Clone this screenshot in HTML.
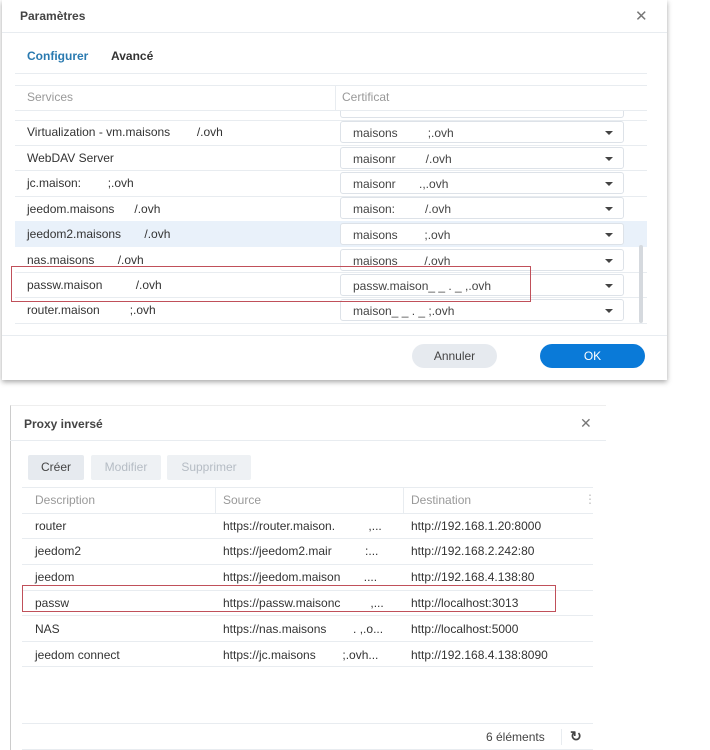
<!DOCTYPE html><html><head><meta charset="utf-8"><style>
*{margin:0;padding:0;box-sizing:border-box}
body{width:710px;height:750px;background:#fff;font-family:"Liberation Sans",sans-serif;font-size:12px;color:#333;position:relative;overflow:hidden}
.a{position:absolute;white-space:nowrap}
.sel{position:absolute;left:340px;width:284px;height:22px;border:1px solid #dde2e8;border-radius:3px;background:#fff;padding:4px 0 0 12px;color:#444}
.sel:after{content:"";position:absolute;right:10px;top:9px;border-left:4px solid transparent;border-right:4px solid transparent;border-top:4px solid #444}
.sel.p:after{display:none}
.hl{position:absolute;height:1px;background:#e8ecf0}
</style></head><body>
<div class="a" style="left:2px;top:0;width:665px;height:380px;background:#fff;box-shadow:0 2px 5px rgba(0,0,0,.35)"></div>
<div class="a" style="left:20px;top:9px;font-size:12px;font-weight:bold;color:#444">Paramètres</div>
<div class="a" style="left:635px;top:7px;font-size:15px;color:#777">✕</div>
<div class="hl" style="left:2px;top:32px;width:665px"></div>
<div class="a" style="left:27px;top:49px;font-weight:bold;color:#2a7ab0">Configurer</div>
<div class="a" style="left:111px;top:49px;font-weight:bold;color:#333">Avancé</div>
<div class="hl" style="left:15px;top:73px;width:632px"></div>
<div class="hl" style="left:15px;top:85px;width:632px"></div>
<div class="a" style="left:27px;top:90px;color:#999">Services</div>
<div class="a" style="left:335px;top:85px;width:1px;height:25px;background:#e8ecf0"></div>
<div class="a" style="left:342px;top:90px;color:#999">Certificat</div>
<div class="hl" style="left:15px;top:110px;width:632px"></div>
<div class="a" style="left:15px;top:221px;width:632px;height:26px;background:#e9f1fa"></div>
<div class="a" style="left:27px;top:125px">Virtualization - vm.maisons&nbsp;&nbsp;&nbsp;&nbsp;&nbsp;&nbsp;&nbsp;&nbsp;/.ovh</div>
<div class="a" style="left:27px;top:151px">WebDAV Server</div>
<div class="a" style="left:27px;top:176px">jc.maison:&nbsp;&nbsp;&nbsp;&nbsp;&nbsp;&nbsp;&nbsp;&nbsp;;.ovh</div>
<div class="a" style="left:27px;top:202px">jeedom.maisons&nbsp;&nbsp;&nbsp;&nbsp;&nbsp;&nbsp;/.ovh</div>
<div class="a" style="left:27px;top:227px">jeedom2.maisons&nbsp;&nbsp;&nbsp;&nbsp;&nbsp;&nbsp;&nbsp;/.ovh</div>
<div class="a" style="left:27px;top:253px">nas.maisons&nbsp;&nbsp;&nbsp;&nbsp;&nbsp;&nbsp;&nbsp;/.ovh</div>
<div class="a" style="left:27px;top:278px">passw.maison&nbsp;&nbsp;&nbsp;&nbsp;&nbsp;&nbsp;&nbsp;&nbsp;&nbsp;&nbsp;/.ovh</div>
<div class="a" style="left:27px;top:303px">router.maison&nbsp;&nbsp;&nbsp;&nbsp;&nbsp;&nbsp;&nbsp;&nbsp;&nbsp;;.ovh</div>
<div class="hl" style="left:15px;top:120px;width:632px"></div>
<div class="hl" style="left:15px;top:145px;width:632px"></div>
<div class="hl" style="left:15px;top:170px;width:632px"></div>
<div class="hl" style="left:15px;top:196px;width:632px"></div>
<div class="hl" style="left:15px;top:272px;width:632px"></div>
<div class="hl" style="left:15px;top:297px;width:632px"></div>
<div class="hl" style="left:15px;top:323px;width:632px"></div>
<div class="sel p" style="top:111px;height:7px;border-top:none;border-radius:0 0 3px 3px"></div>
<div class="sel" style="top:121px">maisons&nbsp;&nbsp;&nbsp;&nbsp;&nbsp;&nbsp;&nbsp;&nbsp;&nbsp;;.ovh</div>
<div class="sel" style="top:147px">maisonr&nbsp;&nbsp;&nbsp;&nbsp;&nbsp;&nbsp;&nbsp;&nbsp;&nbsp;/.ovh</div>
<div class="sel" style="top:172px">maisonr&nbsp;&nbsp;&nbsp;&nbsp;&nbsp;&nbsp;&nbsp;.,.ovh</div>
<div class="sel" style="top:197px">maison:&nbsp;&nbsp;&nbsp;&nbsp;&nbsp;&nbsp;&nbsp;&nbsp;&nbsp;/.ovh</div>
<div class="sel" style="top:223px">maisons&nbsp;&nbsp;&nbsp;&nbsp;&nbsp;&nbsp;&nbsp;&nbsp;;.ovh</div>
<div class="sel" style="top:249px">maisons&nbsp;&nbsp;&nbsp;&nbsp;&nbsp;&nbsp;&nbsp;&nbsp;/.ovh</div>
<div class="sel" style="top:274px">passw.maison_ _ . _ ,.ovh</div>
<div class="sel" style="top:299px">maison_ _ . _ ;.ovh</div>
<div class="a" style="left:639px;top:245px;width:4px;height:78px;background:#d5d9de;border-radius:2px"></div>
<div class="a" style="left:11px;top:266px;width:520px;height:36px;border:1px solid #c0505a"></div>
<div class="hl" style="left:2px;top:335px;width:665px"></div>
<div class="a" style="left:412px;top:344px;width:85px;height:24px;border-radius:12px;background:#e6eaef;color:#444;text-align:center;line-height:24px">Annuler</div>
<div class="a" style="left:540px;top:344px;width:105px;height:24px;border-radius:12px;background:#0a7ad8;color:#fff;text-align:center;line-height:24px">OK</div>
<div class="a" style="left:10px;top:405px;width:596px;height:345px;background:#fff;border-left:1px solid #ccc;border-top:1px solid #eee"></div>
<div class="a" style="left:24px;top:417px;font-weight:bold;color:#444">Proxy inversé</div>
<div class="a" style="left:580px;top:415px;font-size:14px;color:#777">✕</div>
<div class="hl" style="left:10px;top:440px;width:596px"></div>
<div class="a" style="left:28px;top:455px;width:56px;height:25px;background:#e6eaef;border-radius:2px;text-align:center;line-height:25px;color:#444">Créer</div>
<div class="a" style="left:91px;top:455px;width:70px;height:25px;background:#eef1f4;border-radius:2px;text-align:center;line-height:25px;color:#b5bcc4">Modifier</div>
<div class="a" style="left:167px;top:455px;width:84px;height:25px;background:#eef1f4;border-radius:2px;text-align:center;line-height:25px;color:#b5bcc4">Supprimer</div>
<div class="hl" style="left:22px;top:487px;width:571px"></div>
<div class="a" style="left:35px;top:493px;color:#999">Description</div>
<div class="a" style="left:215px;top:488px;width:1px;height:25px;background:#e8ecf0"></div>
<div class="a" style="left:223px;top:493px;color:#999">Source</div>
<div class="a" style="left:403px;top:488px;width:1px;height:25px;background:#e8ecf0"></div>
<div class="a" style="left:411px;top:493px;color:#999">Destination</div>
<div class="a" style="left:584px;top:492px;color:#bbb">⋮</div>
<div class="hl" style="left:22px;top:513px;width:571px"></div>
<div class="hl" style="left:22px;top:538px;width:571px"></div>
<div class="hl" style="left:22px;top:564px;width:571px"></div>
<div class="hl" style="left:22px;top:590px;width:571px"></div>
<div class="hl" style="left:22px;top:615px;width:571px"></div>
<div class="hl" style="left:22px;top:641px;width:571px"></div>
<div class="hl" style="left:22px;top:666px;width:571px"></div>
<div class="a" style="left:35px;top:519px">router</div><div class="a" style="left:223px;top:519px">https://router.maison.&nbsp;&nbsp;&nbsp;&nbsp;&nbsp;&nbsp;&nbsp;&nbsp;&nbsp;&nbsp;,...</div><div class="a" style="left:411px;top:519px">http://192.168.1.20:8000</div>
<div class="a" style="left:35px;top:544px">jeedom2</div><div class="a" style="left:223px;top:544px">https://jeedom2.mair&nbsp;&nbsp;&nbsp;&nbsp;&nbsp;&nbsp;&nbsp;&nbsp;&nbsp;&nbsp;:...</div><div class="a" style="left:411px;top:544px">http://192.168.2.242:80</div>
<div class="a" style="left:35px;top:570px">jeedom</div><div class="a" style="left:223px;top:570px">https://jeedom.maison&nbsp;&nbsp;&nbsp;&nbsp;&nbsp;&nbsp;&nbsp;....</div><div class="a" style="left:411px;top:570px">http://192.168.4.138:80</div>
<div class="a" style="left:35px;top:596px">passw</div><div class="a" style="left:223px;top:596px">https://passw.maisonc&nbsp;&nbsp;&nbsp;&nbsp;&nbsp;&nbsp;&nbsp;&nbsp;&nbsp;,...</div><div class="a" style="left:411px;top:596px">http://localhost:3013</div>
<div class="a" style="left:35px;top:622px">NAS</div><div class="a" style="left:223px;top:622px">https://nas.maisons&nbsp;&nbsp;&nbsp;&nbsp;&nbsp;&nbsp;&nbsp;&nbsp;. ,.o...</div><div class="a" style="left:411px;top:622px">http://localhost:5000</div>
<div class="a" style="left:35px;top:648px">jeedom connect</div><div class="a" style="left:223px;top:648px">https://jc.maisons&nbsp;&nbsp;&nbsp;&nbsp;&nbsp;&nbsp;&nbsp;&nbsp;;.ovh...</div><div class="a" style="left:411px;top:648px">http://192.168.4.138:8090</div>
<div class="a" style="left:22px;top:585px;width:534px;height:27px;border:1px solid #c0505a"></div>
<div class="hl" style="left:22px;top:723px;width:571px"></div>
<div class="a" style="left:486px;top:730px;color:#444">6 éléments</div>
<div class="a" style="left:561px;top:729px;width:1px;height:16px;background:#e8ecf0"></div>
<div class="a" style="left:570px;top:728px;font-size:14px;font-weight:bold;color:#444">↻</div>
<div class="hl" style="left:22px;top:749px;width:571px"></div>
</body></html>
